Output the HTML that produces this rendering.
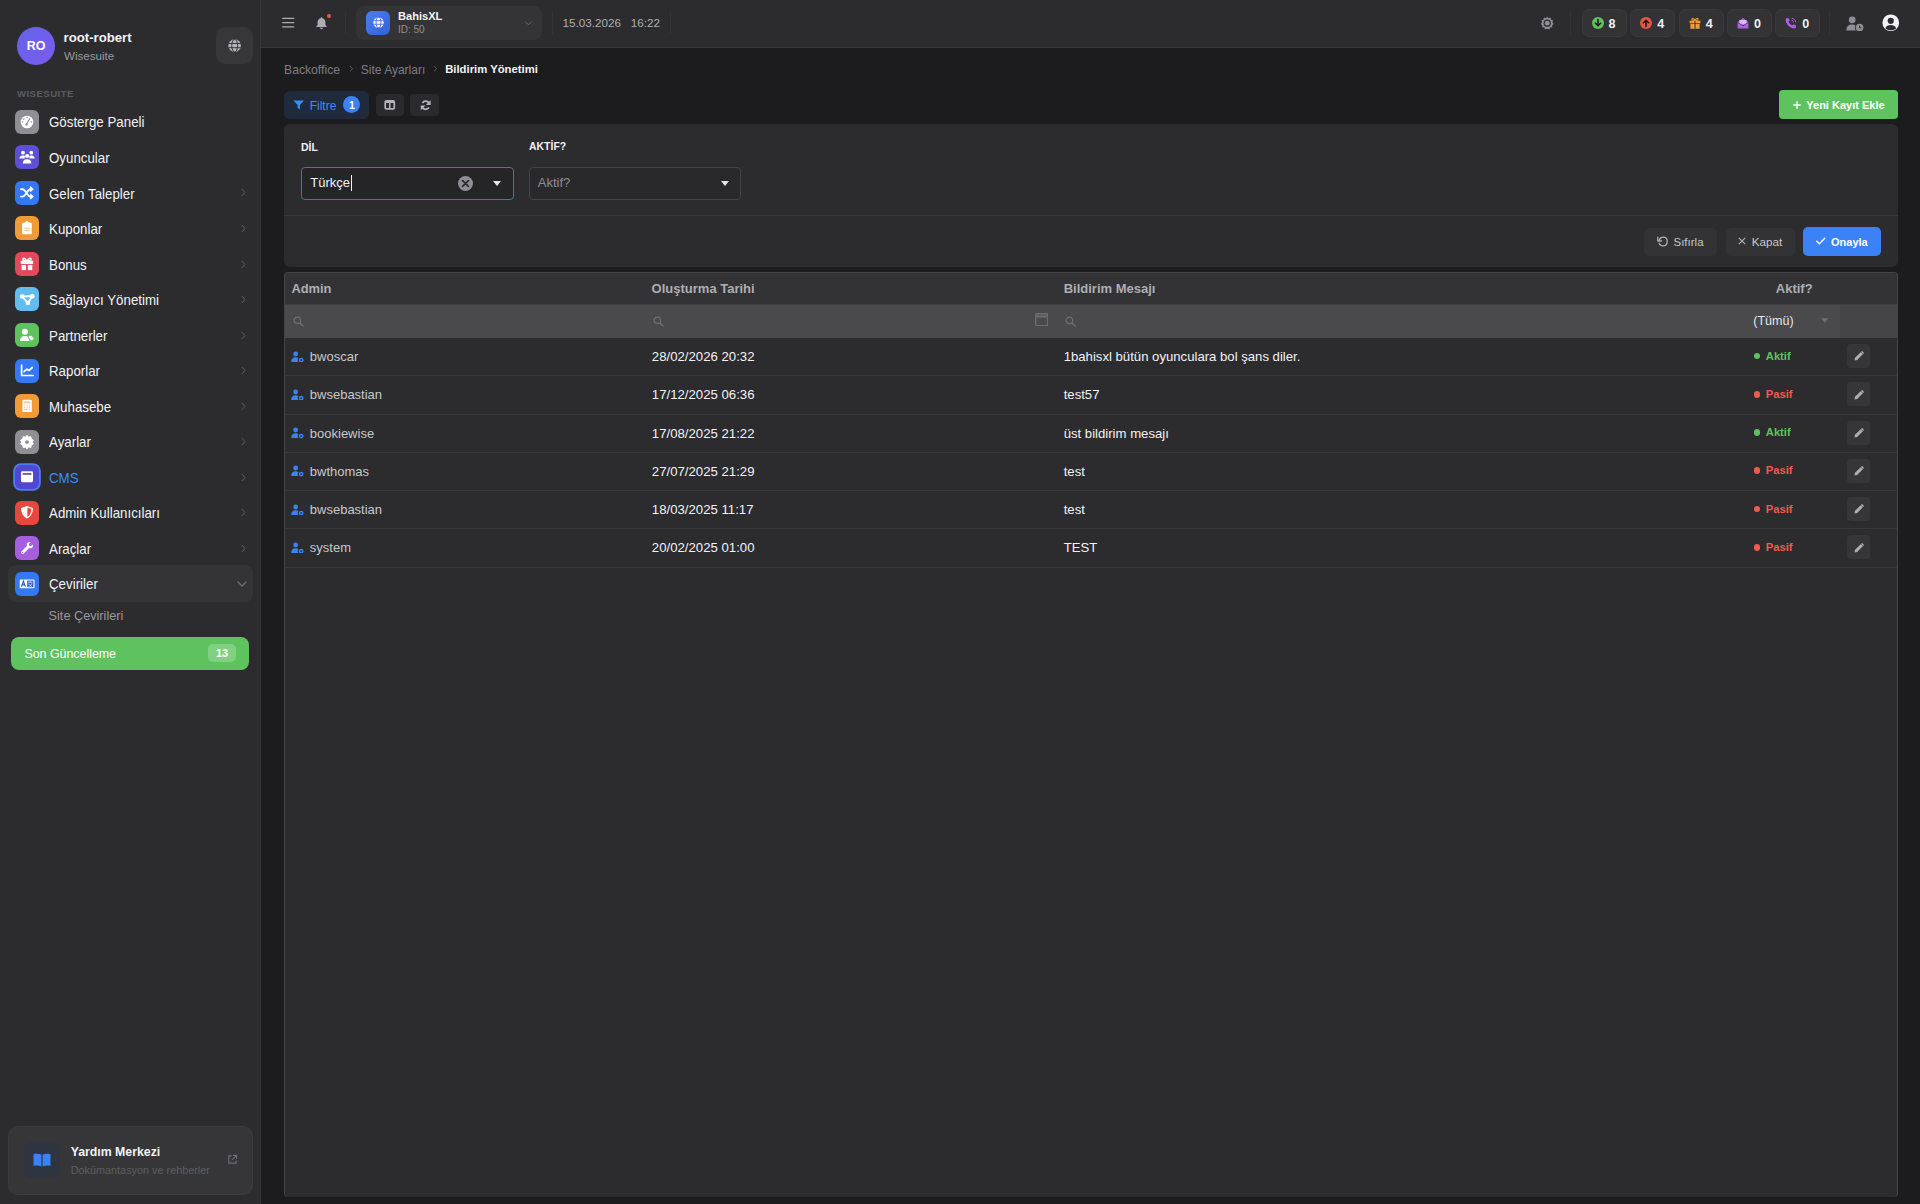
<!DOCTYPE html>
<html><head><meta charset="utf-8"><title>Bildirim Yönetimi</title>
<style>
*{box-sizing:border-box;margin:0;padding:0}
html,body{width:1920px;height:1204px;overflow:hidden;background:#1c1c1e;font-family:"Liberation Sans",sans-serif;color:#e5e5ea}
.abs{position:absolute}
.abs svg,.nav svg{display:block}
#sidebar{position:absolute;left:0;top:0;width:261px;height:1204px;background:#2c2c2e;border-right:1px solid #363638}
#topbar{position:absolute;left:261px;top:0;width:1659px;height:47.5px;background:#2c2c2e;border-bottom:1px solid #363638}
.t{position:absolute;white-space:nowrap;line-height:1}
.nav{position:absolute;left:0;width:261px;height:36px}
.nav .ic{position:absolute;left:15px;top:6px;width:24px;height:24px;border-radius:6px}
.nav .ic svg{position:absolute;left:0;top:0}
.nav .lb{position:absolute;left:48.5px;top:11.7px;font-size:14.4px;line-height:1;white-space:nowrap;transform:scaleX(0.925);transform-origin:0 0}
.panel{position:absolute;background:#2c2c2e;border-radius:6px}
.badge{position:absolute;top:9px;height:28px;width:45px;border-radius:7px;background:#333335;border:1px solid #3a3a3c}
.badge svg{position:absolute;left:9px;top:7px}
.badge span{position:absolute;left:26px;top:7.5px;font-size:12.5px;font-weight:700;color:#f2f2f7;line-height:1}
.sep{position:absolute;top:12px;width:1px;height:22px;background:#343436}
.btn{position:absolute;border-radius:5px}
.row{position:absolute;left:285px;width:1611px;height:38.3px;border-bottom:1px solid #38383a}
.cell{position:absolute;top:13px;font-size:13px;line-height:1;white-space:nowrap;color:#f2f2f7}

</style></head>
<body>
<div id="sidebar">
  <div class="abs" style="left:17px;top:27px;width:38px;height:38px;border-radius:50%;background:linear-gradient(135deg,#6462e8,#7b5cf0)"></div>
  <div class="t" style="left:17px;top:40px;width:38px;text-align:center;font-size:12.5px;font-weight:700;color:#fff">RO</div>
  <div class="t" style="left:63.5px;top:31px;font-size:13.2px;font-weight:700;color:#f2f2f7">root-robert</div>
  <div class="t" style="left:64px;top:50px;font-size:11.6px;color:#98989d">Wisesuite</div>
  <div class="abs" style="left:216px;top:27px;width:37px;height:37px;border-radius:9px;background:#37373a"><svg viewBox="0 0 16 16" width="13.3" height="13.3" style="position:absolute;left:11.8px;top:11.9px"><circle cx="8" cy="8" r="7.6" fill="#b4b4b8"/><path d="M0.4 5.4 H15.6 M0.4 10.5 H15.6" stroke="#37373a" stroke-width="1.2"/><ellipse cx="8" cy="8" rx="3.5" ry="7.6" fill="none" stroke="#37373a" stroke-width="1.2"/></svg></div>
  <div class="t" style="left:17px;top:89px;font-size:9.6px;font-weight:700;letter-spacing:0.45px;color:#5d5d61">WISESUITE</div>
<div class="nav" style="top:103.80px"><div class="ic" style="background:#8e8e93;"><svg viewBox="0 0 24 24" width="24" height="24" ><circle cx="12" cy="12" r="6.3" fill="#fff"/><circle cx="12" cy="7.6" r="0.75" fill="#8e8e93"/><circle cx="8.9" cy="8.9" r="0.75" fill="#8e8e93"/><circle cx="7.7" cy="12" r="0.75" fill="#8e8e93"/><circle cx="16.3" cy="12" r="0.75" fill="#8e8e93"/><path d="M11.6 14.2 L14.6 8.8" stroke="#8e8e93" stroke-width="1.2" stroke-linecap="round"/><circle cx="11.5" cy="14.4" r="1.2" fill="#8e8e93"/></svg></div><div class="lb" style="color:#f2f2f7">Gösterge Paneli</div>
</div>
<div class="nav" style="top:139.33px"><div class="ic" style="background:#5b50d6;"><svg viewBox="0 0 24 24" width="24" height="24" ><circle cx="8" cy="7.7" r="1.9" fill="#fff"/><circle cx="16.3" cy="7.7" r="1.9" fill="#fff"/><circle cx="12.1" cy="11" r="2.1" fill="#fff"/><path d="M4.4 13.4 C4.6 11.4 5.9 10.4 7.4 10.4 H8.6 C9.3 10.4 9.8 10.6 10.2 10.9 C9.7 11.6 9.6 12.4 9.8 13.4 Z" fill="#fff"/><path d="M19.8 13.4 C19.6 11.4 18.3 10.4 16.8 10.4 H15.6 C14.9 10.4 14.4 10.6 14 10.9 C14.5 11.6 14.6 12.4 14.4 13.4 Z" fill="#fff"/><path d="M7.7 18.4 C7.9 15.9 9.6 14.3 11.3 14.3 H12.9 C14.6 14.3 16.3 15.9 16.5 18.4 Z" fill="#fff"/></svg></div><div class="lb" style="color:#f2f2f7">Oyuncular</div>
</div>
<div class="nav" style="top:174.86px"><div class="ic" style="background:#3478f6;"><svg viewBox="0 0 24 24" width="24" height="24" ><path d="M6 8.2 H7.6 C10.6 8.2 12.4 15.6 15.4 15.6 H16.2" stroke="#fff" stroke-width="1.9" fill="none" stroke-linecap="round"/><path d="M6 15.6 H7.6 C10.6 15.6 12.4 8.2 15.4 8.2 H16.2" stroke="#fff" stroke-width="1.9" fill="none" stroke-linecap="round"/><path d="M15.4 5.6 L18.4 8.2 L15.4 10.8 Z" fill="#fff" stroke="#fff" stroke-width="0.8" stroke-linejoin="round"/><path d="M15.4 13 L18.4 15.6 L15.4 18.2 Z" fill="#fff" stroke="#fff" stroke-width="0.8" stroke-linejoin="round"/></svg></div><div class="lb" style="color:#f2f2f7">Gelen Talepler</div>
<div class="abs" style="left:240.5px;top:13.6px"><svg viewBox="0 0 6 10" width="5" height="9" ><path d="M1.2 1 L4.8 5 L1.2 9" stroke="#636367" stroke-width="1.15" fill="none" stroke-linecap="round" stroke-linejoin="round"/></svg></div>
</div>
<div class="nav" style="top:210.39px"><div class="ic" style="background:#f19a38;"><svg viewBox="0 0 24 24" width="24" height="24" ><rect x="7.1" y="6.8" width="9.7" height="11.5" rx="1.3" fill="#fff"/><circle cx="12" cy="6.4" r="1.4" fill="#fff"/><rect x="9.6" y="6.2" width="4.8" height="2" rx="0.6" fill="#fff"/><path d="M8.8 12.2 H15.2 M8.8 14.6 H15.2 M12 11.4 V15.6" stroke="#f7c48a" stroke-width="0.9"/></svg></div><div class="lb" style="color:#f2f2f7">Kuponlar</div>
<div class="abs" style="left:240.5px;top:13.6px"><svg viewBox="0 0 6 10" width="5" height="9" ><path d="M1.2 1 L4.8 5 L1.2 9" stroke="#636367" stroke-width="1.15" fill="none" stroke-linecap="round" stroke-linejoin="round"/></svg></div>
</div>
<div class="nav" style="top:245.92px"><div class="ic" style="background:#e5485a;"><svg viewBox="0 0 24 24" width="24" height="24" ><rect x="5.8" y="8.8" width="12.3" height="3.2" rx="0.5" fill="#fff"/><rect x="6.6" y="12.9" width="4.4" height="5.2" fill="#fff"/><rect x="12.9" y="12.9" width="4.4" height="5.2" fill="#fff"/><path d="M11.6 8.8 C10.6 6 8 5.6 7.9 7.2 C7.8 8.3 9.6 8.8 11.6 8.8 Z M12.4 8.8 C13.4 6 16 5.6 16.1 7.2 C16.2 8.3 14.4 8.8 12.4 8.8 Z" fill="none" stroke="#fff" stroke-width="1.4"/></svg></div><div class="lb" style="color:#f2f2f7">Bonus</div>
<div class="abs" style="left:240.5px;top:13.6px"><svg viewBox="0 0 6 10" width="5" height="9" ><path d="M1.2 1 L4.8 5 L1.2 9" stroke="#636367" stroke-width="1.15" fill="none" stroke-linecap="round" stroke-linejoin="round"/></svg></div>
</div>
<div class="nav" style="top:281.45px"><div class="ic" style="background:#62bcf0;"><svg viewBox="0 0 24 24" width="24" height="24" ><path d="M7.1 9.5 L17.3 9.2 M7.1 9.5 L12.9 16 M17.3 9.2 L12.9 16" stroke="#fff" stroke-width="1.8"/><circle cx="7.1" cy="9.5" r="2.3" fill="#fff"/><circle cx="17.3" cy="9.2" r="2.3" fill="#fff"/><circle cx="12.9" cy="16" r="2.3" fill="#fff"/></svg></div><div class="lb" style="color:#f2f2f7">Sağlayıcı Yönetimi</div>
<div class="abs" style="left:240.5px;top:13.6px"><svg viewBox="0 0 6 10" width="5" height="9" ><path d="M1.2 1 L4.8 5 L1.2 9" stroke="#636367" stroke-width="1.15" fill="none" stroke-linecap="round" stroke-linejoin="round"/></svg></div>
</div>
<div class="nav" style="top:316.98px"><div class="ic" style="background:#5ec35e;"><svg viewBox="0 0 24 24" width="24" height="24" ><circle cx="9.9" cy="8.8" r="3" fill="#fff"/><path d="M5 18.1 C5 14.9 6.9 12.9 9.9 12.9 C11.2 12.9 12.3 13.2 13.1 13.8 L14.6 18.1 Z" fill="#fff"/><path d="M13.6 13 L16 12.2 L19.3 15.5 L16.7 18.1 L13.4 14.8 Z" fill="#fff" stroke="#5ec35e" stroke-width="0.7" stroke-linejoin="round"/></svg></div><div class="lb" style="color:#f2f2f7">Partnerler</div>
<div class="abs" style="left:240.5px;top:13.6px"><svg viewBox="0 0 6 10" width="5" height="9" ><path d="M1.2 1 L4.8 5 L1.2 9" stroke="#636367" stroke-width="1.15" fill="none" stroke-linecap="round" stroke-linejoin="round"/></svg></div>
</div>
<div class="nav" style="top:352.51px"><div class="ic" style="background:#3478f6;"><svg viewBox="0 0 24 24" width="24" height="24" ><path d="M6.6 6.1 V16.5 H18.1" stroke="#fff" stroke-width="1.7" fill="none" stroke-linecap="round" stroke-linejoin="round"/><path d="M9.1 12.6 L11.8 10.1 L14 11.5 L17.3 8.5" stroke="#fff" stroke-width="1.7" fill="none" stroke-linecap="round" stroke-linejoin="round"/></svg></div><div class="lb" style="color:#f2f2f7">Raporlar</div>
<div class="abs" style="left:240.5px;top:13.6px"><svg viewBox="0 0 6 10" width="5" height="9" ><path d="M1.2 1 L4.8 5 L1.2 9" stroke="#636367" stroke-width="1.15" fill="none" stroke-linecap="round" stroke-linejoin="round"/></svg></div>
</div>
<div class="nav" style="top:388.04px"><div class="ic" style="background:#f19a38;"><svg viewBox="0 0 24 24" width="24" height="24" ><rect x="7.4" y="5.8" width="9.4" height="12.3" rx="1.2" fill="#fff"/><rect x="8.8" y="7.3" width="6.6" height="2" fill="#f19a38" opacity="0.5"/><g fill="#f19a38" opacity="0.55"><rect x="9" y="10.6" width="1.3" height="1"/><rect x="11.5" y="10.6" width="1.3" height="1"/><rect x="14" y="10.6" width="1.3" height="1"/><rect x="9" y="12.8" width="1.3" height="1"/><rect x="11.5" y="12.8" width="1.3" height="1"/><rect x="14" y="12.8" width="1.3" height="1"/><rect x="9" y="15" width="3.8" height="1"/><rect x="14" y="15" width="1.3" height="1"/></g></svg></div><div class="lb" style="color:#f2f2f7">Muhasebe</div>
<div class="abs" style="left:240.5px;top:13.6px"><svg viewBox="0 0 6 10" width="5" height="9" ><path d="M1.2 1 L4.8 5 L1.2 9" stroke="#636367" stroke-width="1.15" fill="none" stroke-linecap="round" stroke-linejoin="round"/></svg></div>
</div>
<div class="nav" style="top:423.57px"><div class="ic" style="background:#8e8e93;"><svg viewBox="0 0 24 24" width="24" height="24" ><path d="M12 5.2 L13.4 7.2 L15.8 6.6 L16.3 9 L18.4 10.2 L17.2 12.1 L18.4 14 L16.3 15.2 L15.8 17.6 L13.4 17 L12 19 L10.6 17 L8.2 17.6 L7.7 15.2 L5.6 14 L6.8 12.1 L5.6 10.2 L7.7 9 L8.2 6.6 L10.6 7.2 Z" fill="#fff" stroke="#fff" stroke-width="0.9" stroke-linejoin="round"/><circle cx="12" cy="12.1" r="1.9" fill="#8e8e93"/></svg></div><div class="lb" style="color:#f2f2f7">Ayarlar</div>
<div class="abs" style="left:240.5px;top:13.6px"><svg viewBox="0 0 6 10" width="5" height="9" ><path d="M1.2 1 L4.8 5 L1.2 9" stroke="#636367" stroke-width="1.15" fill="none" stroke-linecap="round" stroke-linejoin="round"/></svg></div>
</div>
<div class="nav" style="top:459.10px"><div class="ic" style="background:#5048d2;box-shadow:0 0 0 1.8px #4a7ff2;"><svg viewBox="0 0 24 24" width="24" height="24" ><rect x="6" y="6.2" width="12" height="11" rx="1.4" fill="#fff"/><rect x="7.6" y="8.1" width="8.8" height="1.7" fill="#5a5690"/></svg></div><div class="lb" style="color:#3b8cf7">CMS</div>
<div class="abs" style="left:240.5px;top:13.6px"><svg viewBox="0 0 6 10" width="5" height="9" ><path d="M1.2 1 L4.8 5 L1.2 9" stroke="#636367" stroke-width="1.15" fill="none" stroke-linecap="round" stroke-linejoin="round"/></svg></div>
</div>
<div class="nav" style="top:494.63px"><div class="ic" style="background:#e5483c;"><svg viewBox="0 0 24 24" width="24" height="24" ><path d="M12 4.9 L17.9 7 C17.9 12.4 15.6 15.8 12 17.5 C8.4 15.8 6.1 12.4 6.1 7 Z" fill="#fff"/><path d="M12.4 6.6 L16.5 8 C16.3 12 14.8 14.6 12.4 15.9 Z" fill="#e5483c"/></svg></div><div class="lb" style="color:#f2f2f7">Admin Kullanıcıları</div>
<div class="abs" style="left:240.5px;top:13.6px"><svg viewBox="0 0 6 10" width="5" height="9" ><path d="M1.2 1 L4.8 5 L1.2 9" stroke="#636367" stroke-width="1.15" fill="none" stroke-linecap="round" stroke-linejoin="round"/></svg></div>
</div>
<div class="nav" style="top:530.16px"><div class="ic" style="background:#a55ee0;"><svg viewBox="0 0 24 24" width="24" height="24" ><path d="M17.7 8.4 L15.9 10.1 L14.2 9.8 L13.9 8.1 L15.6 6.3 C14 5.7 12.1 6.5 11.8 8.2 C11.7 8.8 11.7 9.4 12 9.9 L6.6 15.3 C6 15.9 6 16.9 6.6 17.5 C7.2 18.1 8.2 18.1 8.8 17.5 L14.2 12.1 C14.7 12.4 15.3 12.4 15.9 12.3 C17.6 12 18.4 10 17.7 8.4 Z" fill="#fff"/><circle cx="7.7" cy="16.4" r="0.6" fill="#a55ee0"/></svg></div><div class="lb" style="color:#f2f2f7">Araçlar</div>
<div class="abs" style="left:240.5px;top:13.6px"><svg viewBox="0 0 6 10" width="5" height="9" ><path d="M1.2 1 L4.8 5 L1.2 9" stroke="#636367" stroke-width="1.15" fill="none" stroke-linecap="round" stroke-linejoin="round"/></svg></div>
</div>
<div class="abs" style="left:8px;top:565.49px;width:244.5px;height:36.5px;border-radius:8px;background:#343436"></div>
<div class="nav" style="top:565.69px"><div class="ic" style="background:#3478f6;"><svg viewBox="0 0 24 24" width="24" height="24" ><rect x="4.7" y="7.4" width="14.8" height="8.8" rx="1" fill="#fff"/><path d="M6.4 14.6 L8.4 9.2 L10.4 14.6 M7.1 12.9 H9.7" stroke="#2f5fc8" stroke-width="1.2" fill="none"/><rect x="12.2" y="8.6" width="6.2" height="6.6" fill="#2f5fc8"/><path d="M13.2 10.2 H17.4 M15.3 9.4 V10.2 M13.8 11.6 C14.6 13.4 15.8 14.2 17 14.4 M16.8 11.4 C16.2 13 15 14.2 13.6 14.6" stroke="#fff" stroke-width="0.7" fill="none"/></svg></div><div class="lb" style="color:#f2f2f7">Çeviriler</div>
<div class="abs" style="left:237px;top:15px"><svg viewBox="0 0 10 6" width="10" height="6" ><path d="M1 1 L5 5 L9 1" stroke="#6e6e73" stroke-width="1.2" fill="none" stroke-linecap="round" stroke-linejoin="round"/></svg></div>
</div>
  <div class="t" style="left:48.6px;top:610px;font-size:12.7px;color:#98989d">Site Çevirileri</div>
  <div class="abs" style="left:11px;top:636.6px;width:238px;height:33px;border-radius:8px;background:#5ec35e"></div>
  <div class="t" style="left:24.4px;top:648px;font-size:12.4px;color:#fff">Son Güncelleme</div>
  <div class="abs" style="left:208px;top:644px;width:28px;height:18px;border-radius:5px;background:rgba(255,255,255,0.22)"></div>
  <div class="t" style="left:208px;top:648px;width:28px;text-align:center;font-size:11px;font-weight:700;color:#fff">13</div>
  <div class="abs" style="left:7.5px;top:1125.5px;width:245.5px;height:69.5px;border-radius:10px;background:#363638;border:1px solid #3c3c3e"></div>
  <div class="abs" style="left:24px;top:1141.5px;width:36px;height:36px;border-radius:8px;background:#2e3440"><svg viewBox="0 0 18 14" width="18" height="14" style="position:absolute;left:9px;top:11px"><path d="M0.5 1.2 C3 0.4 6 0.6 8.4 1.6 V13.4 C6 12.4 3 12.3 0.5 13 Z" fill="#3b82f6"/><path d="M17.5 1.2 C15 0.4 12 0.6 9.6 1.6 V13.4 C12 12.4 15 12.3 17.5 13 Z" fill="#3b82f6"/></svg></div>
  <div class="t" style="left:70.7px;top:1146px;font-size:12.3px;font-weight:700;color:#f2f2f7">Yardım Merkezi</div>
  <div class="t" style="left:70.7px;top:1165px;font-size:10.85px;color:#5d5d62">Dokümantasyon ve rehberler</div>
  <div class="abs" style="left:227px;top:1154px"><svg viewBox="0 0 12 12" width="11" height="11" ><path d="M5 2 H2 V10 H10 V7" stroke="#6e6e73" stroke-width="1.2" fill="none"/><path d="M6.5 1.5 H10.5 V5.5 M10.5 1.5 L5.5 6.5" stroke="#6e6e73" stroke-width="1.2" fill="none"/></svg></div>
</div>
<div id="topbar">
<div class="abs" style="left:21px;top:17px;"><svg viewBox="0 0 13 11" width="12.5" height="11" ><path d="M0.7 1.2 H12.3 M0.7 5.6 H12.3 M0.7 10 H12.3" stroke="#aeaeb2" stroke-width="1.3" stroke-linecap="round"/></svg></div>
<div class="abs" style="left:54px;top:16px;"><svg viewBox="0 0 14 14" width="13" height="14" ><path d="M7 0.8 C7.6 0.8 8 1.2 8 1.8 C10.2 2.3 11.2 4.2 11.2 6.4 V9 L12.6 10.8 V11.4 H1.4 V10.8 L2.8 9 V6.4 C2.8 4.2 3.8 2.3 6 1.8 C6 1.2 6.4 0.8 7 0.8 Z" fill="#aeaeb2"/><path d="M5.4 12.2 H8.6 C8.6 13.1 7.9 13.8 7 13.8 C6.1 13.8 5.4 13.1 5.4 12.2 Z" fill="#aeaeb2"/></svg></div>
<div class="abs" style="left:65.69999999999999px;top:14px;"><div style="width:4.4px;height:4.4px;border-radius:50%;background:#e8574b"></div></div>
<div class="sep" style="left:84px"></div>
<div class="abs" style="left:95px;top:6px;width:186px;height:34px;border-radius:8px;background:#343436"></div>
<div class="abs" style="left:105px;top:10.5px;width:24px;height:24px;border-radius:6px;background:linear-gradient(135deg,#4a7ef0,#3560d8)"><svg viewBox="0 0 16 16" width="11" height="11" style="position:absolute;left:6.5px;top:6.5px"><circle cx="8" cy="8" r="7.6" fill="#fff"/><path d="M0.4 5.4 H15.6 M0.4 10.5 H15.6" stroke="#3d6ae6" stroke-width="1.3"/><ellipse cx="8" cy="8" rx="3.5" ry="7.6" fill="none" stroke="#3d6ae6" stroke-width="1.3"/></svg></div>
<div class="t" style="left:137px;top:11.2px;font-size:11.1px;font-weight:700;color:#f2f2f7;">BahisXL</div>
<div class="t" style="left:137px;top:24.6px;font-size:10px;font-weight:400;color:#8e8e93;">ID: 50</div>
<div class="abs" style="left:264px;top:21px;"><svg viewBox="0 0 8 5" width="7" height="5" ><path d="M0.8 0.8 L4 4 L7.2 0.8" stroke="#6e6e73" stroke-width="1.1" fill="none" stroke-linecap="round"/></svg></div>
<div class="sep" style="left:291px"></div>
<div class="t" style="left:301.5px;top:17.2px;font-size:11.7px;font-weight:400;color:#aeaeb2;">15.03.2026</div>
<div class="t" style="left:369.79999999999995px;top:17.2px;font-size:11.7px;font-weight:400;color:#aeaeb2;">16:22</div>
<div class="sep" style="left:408.5px"></div>
<div class="abs" style="left:1278.8px;top:15.5px;"><svg viewBox="0 0 16 16" width="14.5" height="14.5" ><path d="M8 0.6 L9.4 2.4 L11.7 1.7 L12.1 4 L14.4 4.8 L13.6 7 L15.2 8.8 L13.4 10.2 L13.6 12.5 L11.3 12.8 L10.2 14.9 L8 14 L5.8 14.9 L4.7 12.8 L2.4 12.5 L2.6 10.2 L0.8 8.8 L2.4 7 L1.6 4.8 L3.9 4 L4.3 1.7 L6.6 2.4 Z" fill="#8e8e93"/><circle cx="8" cy="7.9" r="4" fill="#2c2c2e"/><circle cx="8" cy="7.9" r="2.7" fill="#8e8e93"/></svg></div>
<div class="sep" style="left:1309px"></div>
<div class="badge" style="left:1320.5px"><svg viewBox="0 0 12 12" width="12" height="12" ><circle cx="6" cy="6" r="6" fill="#5ec35e"/><path d="M6 2.6 V8.6 M3.4 6.2 L6 8.8 L8.6 6.2" stroke="#1c1c1e" stroke-width="1.6" fill="none" stroke-linecap="round" stroke-linejoin="round"/></svg><span>8</span></div>
<div class="badge" style="left:1369.2px"><svg viewBox="0 0 12 12" width="12" height="12" ><circle cx="6" cy="6" r="6" fill="#ec5447"/><path d="M6 9.4 V3.4 M3.4 5.8 L6 3.2 L8.6 5.8" stroke="#1c1c1e" stroke-width="1.6" fill="none" stroke-linecap="round" stroke-linejoin="round"/></svg><span>4</span></div>
<div class="badge" style="left:1417.7px"><svg viewBox="0 0 12 12" width="12" height="12" ><rect x="0.6" y="3.6" width="10.8" height="2.6" fill="#f19a38"/><rect x="1.4" y="6.8" width="9.2" height="5" fill="#f19a38"/><path d="M6 3.6 V11.8" stroke="#333335" stroke-width="1"/><path d="M6 3.4 C5 0.8 2.6 1 3 2.6 C3.3 3.4 4.8 3.4 6 3.4 C7.2 3.4 8.7 3.4 9 2.6 C9.4 1 7 0.8 6 3.4 Z" fill="none" stroke="#f19a38" stroke-width="1.1"/></svg><span>4</span></div>
<div class="badge" style="left:1466px"><svg viewBox="0 0 12 12" width="12" height="12" ><path d="M0.6 5 L6 1 L11.4 5 V11.4 H0.6 Z" fill="#b05ee8"/><rect x="2.4" y="3" width="7.2" height="4.4" fill="#d9b5f5"/><path d="M0.6 5.4 L6 8.8 L11.4 5.4" stroke="#333335" stroke-width="0.8" fill="none"/></svg><span>0</span></div>
<div class="badge" style="left:1514.2px"><svg viewBox="0 0 12 12" width="12" height="12" ><path d="M3.2 0.8 L4.8 3.4 L3.6 4.8 C4.3 6.5 5.5 7.7 7.2 8.4 L8.6 7.2 L11.2 8.8 L10.6 11 C10.4 11.4 10 11.4 9.6 11.4 C4.6 11 1 7.4 0.6 2.4 C0.6 2 0.6 1.6 1 1.4 Z" fill="#b05ee8"/><path d="M7 3.4 C7.9 3.6 8.4 4.1 8.6 5 M7.2 1.4 C9 1.7 10.3 3 10.6 4.8" stroke="#b05ee8" stroke-width="1" fill="none" stroke-linecap="round"/></svg><span>0</span></div>
<div class="sep" style="left:1568px"></div>
<div class="abs" style="left:1584.5px;top:15.5px;"><svg viewBox="0 0 18 15" width="18" height="15" ><circle cx="6.2" cy="3.8" r="3.4" fill="#8e8e93"/><path d="M0.4 14.4 C0.4 10.6 2.6 8.6 6.2 8.6 C7.6 8.6 8.8 8.9 9.6 9.4 C9.2 10.1 9 10.9 9 11.8 C9 12.8 9.3 13.7 9.8 14.4 Z" fill="#8e8e93"/><circle cx="13.6" cy="11.6" r="3.8" fill="#8e8e93"/><path d="M13.6 9.6 V11.8 H15.2" stroke="#2c2c2e" stroke-width="1" fill="none"/></svg></div>
<div class="abs" style="left:1621.4px;top:13.6px;"><svg viewBox="0 0 18 18" width="17.5" height="17.5" ><circle cx="9" cy="9" r="8.6" fill="#f2f2f7"/><circle cx="9" cy="7" r="3.2" fill="#2c2c2e"/><path d="M3.4 14.6 C4.4 12.2 6.4 11.2 9 11.2 C11.6 11.2 13.6 12.2 14.6 14.6 C13.2 16 11.2 16.8 9 16.8 C6.8 16.8 4.8 16 3.4 14.6 Z" fill="#2c2c2e"/></svg></div>
</div>
<div class="t" style="left:284px;top:63.5px;font-size:12.2px;font-weight:400;color:#7d7d82;">Backoffice</div>
<div class="abs" style="left:348.5px;top:65px;"><svg viewBox="0 0 5 8" width="4.5" height="7.5" ><path d="M1 1 L4 4 L1 7" stroke="#636366" stroke-width="1" fill="none"/></svg></div>
<div class="t" style="left:360.8px;top:63.5px;font-size:12px;font-weight:400;color:#7d7d82;">Site Ayarları</div>
<div class="abs" style="left:432.5px;top:65px;"><svg viewBox="0 0 5 8" width="4.5" height="7.5" ><path d="M1 1 L4 4 L1 7" stroke="#636366" stroke-width="1" fill="none"/></svg></div>
<div class="t" style="left:445.2px;top:63.5px;font-size:11.3px;font-weight:700;color:#f2f2f7;">Bildirim Yönetimi</div>
<div class="abs" style="left:284px;top:91px;width:85px;height:27.5px;border-radius:6px;background:#1f2a3c"></div>
<div class="abs" style="left:293px;top:100px;"><svg viewBox="0 0 12 10" width="11.5" height="10" ><path d="M0.4 0.4 H11.6 L7.2 5 V9.6 L4.8 8.2 V5 Z" fill="#3b8cf7"/></svg></div>
<div class="t" style="left:309.7px;top:99.5px;font-size:12px;font-weight:400;color:#3b8cf7;">Filtre</div>
<div class="abs" style="left:343.3px;top:96px;width:17px;height:17px;border-radius:50%;background:#3b82f6"><div style="position:absolute;left:0;top:4px;width:17px;font-size:10.5px;font-weight:700;color:#fff;text-align:center;line-height:1">1</div></div>
<div class="abs" style="left:375.6px;top:93.8px;width:28.8px;height:22.4px;border-radius:4px;background:#2a2a2c"><svg viewBox="0 0 12 11" width="11.5" height="10" style="position:absolute;left:8.6px;top:6.3px"><rect x="1" y="1" width="10" height="8.8" rx="1.4" fill="none" stroke="#b4b4b8" stroke-width="1.9"/><path d="M6 1 V9.8" stroke="#b4b4b8" stroke-width="1.7"/><path d="M1 2.2 H11" stroke="#b4b4b8" stroke-width="2.2"/></svg></div>
<div class="abs" style="left:410.4px;top:93.8px;width:28.8px;height:22.4px;border-radius:4px;background:#2a2a2c"><svg viewBox="0 0 12 12" width="11.4" height="10.6" style="position:absolute;left:9.4px;top:6.2px"><path d="M10 4.4 C9.3 2.5 7.8 1.4 6 1.4 C4.4 1.4 3.1 2.2 2.3 3.4" stroke="#b4b4b8" stroke-width="2" fill="none"/><path d="M11.6 0.4 V5.8 H6.2 Z" fill="#b4b4b8"/><path d="M2 7.6 C2.7 9.5 4.2 10.6 6 10.6 C7.6 10.6 8.9 9.8 9.7 8.6" stroke="#b4b4b8" stroke-width="2" fill="none"/><path d="M0.4 11.6 V6.2 H5.8 Z" fill="#b4b4b8"/></svg></div>
<div class="abs" style="left:1778.5px;top:90.4px;width:119px;height:28.2px;border-radius:4px;background:#5ec35e"></div>
<div class="abs" style="left:1792.5px;top:100.5px;"><svg viewBox="0 0 8 8" width="8" height="8" ><path d="M4 0.3 V7.7 M0.3 4 H7.7" stroke="#fff" stroke-width="1.3"/></svg></div>
<div class="t" style="left:1806.3px;top:99.5px;font-size:11px;font-weight:700;color:#fff;">Yeni Kayıt Ekle</div>
<div class="abs" style="left:284px;top:124px;width:1613.5px;height:142.5px;border-radius:6px;background:#2c2c2e"></div>
<div class="abs" style="left:284px;top:215px;width:1613.5px;height:1px;background:#38383a"></div>
<div class="t" style="left:300.9px;top:141.5px;font-size:10.5px;font-weight:700;color:#f2f2f7;">DİL</div>
<div class="t" style="left:529px;top:141.5px;font-size:10.4px;font-weight:700;color:#f2f2f7;letter-spacing:0.05px">AKTİF?</div>
<div class="abs" style="left:301px;top:167px;width:213px;height:33px;border-radius:4px;background:#252527;border:1.5px solid #3b7aa5"></div>
<div class="t" style="left:310.3px;top:176px;font-size:13px;font-weight:400;color:#f2f2f7;">Türkçe</div>
<div class="abs" style="left:350.5px;top:175px;width:1px;height:15.5px;background:#f2f2f7"></div>
<div class="abs" style="left:457.7px;top:175.6px;"><svg viewBox="0 0 15 15" width="15" height="15" ><circle cx="7.5" cy="7.5" r="7.5" fill="#8e8e93"/><path d="M4.6 4.6 L10.4 10.4 M10.4 4.6 L4.6 10.4" stroke="#2a2a2c" stroke-width="1.7" stroke-linecap="round"/></svg></div>
<div class="abs" style="left:492.7px;top:180.6px;"><svg viewBox="0 0 8 5" width="8" height="5" ><path d="M0 0 H8 L4 5 Z" fill="#e5e5ea"/></svg></div>
<div class="abs" style="left:529px;top:167px;width:212px;height:32.5px;border-radius:4px;background:#29292b;border:1px solid #444446"></div>
<div class="t" style="left:537.8px;top:176px;font-size:13px;font-weight:400;color:#8e8e93;">Aktif?</div>
<div class="abs" style="left:720.5px;top:180.6px;"><svg viewBox="0 0 8 5" width="8" height="5" ><path d="M0 0 H8 L4 5 Z" fill="#e5e5ea"/></svg></div>
<div class="abs" style="left:1644px;top:227.6px;width:73px;height:28.4px;border-radius:5px;background:#333335"></div>
<div class="abs" style="left:1657px;top:236px;"><svg viewBox="0 0 11 11" width="11" height="11" ><path d="M2.2 4.2 C2.8 2.4 4.4 1.2 6.2 1.2 C8.6 1.2 10.2 3 10.2 5.5 C10.2 8 8.4 9.8 6 9.8 C4.2 9.8 2.8 8.8 2.2 7.4" stroke="#aeaeb2" stroke-width="1.3" fill="none" stroke-linecap="round"/><path d="M0.8 1.2 V5 H4.6" stroke="#aeaeb2" stroke-width="1.3" fill="none" stroke-linecap="round" stroke-linejoin="round"/></svg></div>
<div class="t" style="left:1673.5px;top:236.5px;font-size:11.5px;font-weight:400;color:#c7c7cc;">Sıfırla</div>
<div class="abs" style="left:1725.5px;top:227.6px;width:69.6px;height:28.4px;border-radius:5px;background:#333335"></div>
<div class="abs" style="left:1738px;top:237px;"><svg viewBox="0 0 8 8" width="8" height="8" ><path d="M0.8 0.8 L7.2 7.2 M7.2 0.8 L0.8 7.2" stroke="#aeaeb2" stroke-width="1.2"/></svg></div>
<div class="t" style="left:1751.8px;top:235.5px;font-size:11.7px;font-weight:400;color:#c7c7cc;">Kapat</div>
<div class="abs" style="left:1802.8px;top:227.3px;width:78px;height:28.5px;border-radius:5px;background:#3b82f6"></div>
<div class="abs" style="left:1816px;top:237px;"><svg viewBox="0 0 10 8" width="9.5" height="8" ><path d="M0.8 4.2 L3.6 7 L9.2 1" stroke="#fff" stroke-width="1.5" fill="none" stroke-linecap="round" stroke-linejoin="round"/></svg></div>
<div class="t" style="left:1831px;top:236.5px;font-size:11px;font-weight:700;color:#fff;">Onayla</div>
<div class="abs" style="left:284px;top:272px;width:1613.5px;height:924.5px;border-radius:4px;background:#2c2c2e;border:1px solid #444446;border-bottom:none;overflow:hidden"></div>
<div class="abs" style="left:285px;top:273px;width:1611.5px;height:31px;border-radius:3px 3px 0 0;background:#333335"></div>
<div class="abs" style="left:285px;top:304px;width:1611.5px;height:1px;background:#3f3f41"></div>
<div class="abs" style="left:285px;top:305px;width:1555px;height:32.8px;background:#4a4a4c"></div>
<div class="abs" style="left:1840px;top:305px;width:56.5px;height:32.8px;background:#454547"></div>
<div class="t" style="left:291.4px;top:283px;font-size:12.9px;font-weight:700;color:#aeaeb2;">Admin</div>
<div class="t" style="left:651.6px;top:281.8px;font-size:13px;font-weight:700;color:#aeaeb2;">Oluşturma Tarihi</div>
<div class="t" style="left:1063.7px;top:281.8px;font-size:13px;font-weight:700;color:#aeaeb2;">Bildirim Mesajı</div>
<div class="t" style="left:1775.8px;top:281.8px;font-size:13px;font-weight:700;color:#aeaeb2;">Aktif?</div>
<div class="abs" style="left:293px;top:315.5px;"><svg viewBox="0 0 12 12" width="11" height="11" ><circle cx="4.8" cy="4.8" r="3.6" fill="none" stroke="#6e6e73" stroke-width="1.3"/><path d="M7.6 7.6 L11 11" stroke="#6e6e73" stroke-width="1.5" stroke-linecap="round"/></svg></div>
<div class="abs" style="left:652.5px;top:315.5px;"><svg viewBox="0 0 12 12" width="11" height="11" ><circle cx="4.8" cy="4.8" r="3.6" fill="none" stroke="#6e6e73" stroke-width="1.3"/><path d="M7.6 7.6 L11 11" stroke="#6e6e73" stroke-width="1.5" stroke-linecap="round"/></svg></div>
<div class="abs" style="left:1065px;top:315.5px;"><svg viewBox="0 0 12 12" width="11" height="11" ><circle cx="4.8" cy="4.8" r="3.6" fill="none" stroke="#6e6e73" stroke-width="1.3"/><path d="M7.6 7.6 L11 11" stroke="#6e6e73" stroke-width="1.5" stroke-linecap="round"/></svg></div>
<div class="abs" style="left:1034.7px;top:312.8px;"><svg viewBox="0 0 14 14" width="13.5" height="13.5" ><rect x="0.8" y="0.8" width="12.4" height="12.4" rx="1.2" fill="none" stroke="#6e6e73" stroke-width="1.4"/><path d="M0.8 3.6 H13.2" stroke="#6e6e73" stroke-width="2.2"/></svg></div>
<div class="t" style="left:1753.3px;top:315px;font-size:12.5px;font-weight:400;color:#e5e5ea;">(Tümü)</div>
<div class="abs" style="left:1820.8px;top:318px;"><svg viewBox="0 0 8 5" width="7.5" height="5" ><path d="M0 0 H8 L4 5 Z" fill="#6e6e73"/></svg></div>
<div class="abs" style="left:285px;top:375.25px;width:1611.5px;height:1px;background:#38383a"></div>
<div class="abs" style="left:291.4px;top:350.5px;"><svg viewBox="0 0 14 12" width="13" height="11.5" ><circle cx="5" cy="3" r="2.6" fill="#3b82f6"/><path d="M0.2 11.6 C0.2 8.4 2 6.6 5 6.6 C6.2 6.6 7.2 6.9 7.9 7.4 C7.5 8 7.3 8.8 7.3 9.6 C7.3 10.4 7.5 11.1 7.9 11.6 Z" fill="#3b82f6"/><circle cx="11" cy="9.6" r="2.5" fill="#3b82f6"/><circle cx="11" cy="9.6" r="1" fill="#2c2c2e"/></svg></div>
<div class="t" style="left:309.8px;top:350.0px;font-size:13px;font-weight:400;color:#c7c7cc;">bwoscar</div>
<div class="t" style="left:651.8px;top:350.0px;font-size:13.2px;font-weight:400;color:#f2f2f7;">28/02/2026 20:32</div>
<div class="t" style="left:1063.7px;top:350.0px;font-size:13.15px;font-weight:400;color:#f2f2f7;">1bahisxl bütün oyunculara bol şans diler.</div>
<div class="abs" style="left:1753.6px;top:352.6px;width:6.8px;height:6.8px;border-radius:50%;background:#5ec35e"></div>
<div class="t" style="left:1765.8px;top:350.5px;font-size:11.2px;font-weight:700;color:#5ec35e;">Aktif</div>
<div class="abs" style="left:1846.8px;top:344.2px;width:23.6px;height:24px;border-radius:3.5px;background:#363638"><svg style="position:absolute;left:6.8px;top:7.2px" viewBox="0 0 12 12" width="10" height="10" ><path d="M0.6 11.4 L1.2 8.2 L8 1.4 L10.6 4 L3.8 10.8 Z" fill="#aeaeb2"/><path d="M8.8 0.6 C9.3 0.1 10 0.1 10.5 0.6 L11.4 1.5 C11.9 2 11.9 2.7 11.4 3.2 L10.9 3.7 L8.3 1.1 Z" fill="#aeaeb2"/></svg></div>
<div class="abs" style="left:285px;top:413.5px;width:1611.5px;height:1px;background:#38383a"></div>
<div class="abs" style="left:291.4px;top:388.75px;"><svg viewBox="0 0 14 12" width="13" height="11.5" ><circle cx="5" cy="3" r="2.6" fill="#3b82f6"/><path d="M0.2 11.6 C0.2 8.4 2 6.6 5 6.6 C6.2 6.6 7.2 6.9 7.9 7.4 C7.5 8 7.3 8.8 7.3 9.6 C7.3 10.4 7.5 11.1 7.9 11.6 Z" fill="#3b82f6"/><circle cx="11" cy="9.6" r="2.5" fill="#3b82f6"/><circle cx="11" cy="9.6" r="1" fill="#2c2c2e"/></svg></div>
<div class="t" style="left:309.8px;top:388.25px;font-size:13px;font-weight:400;color:#c7c7cc;">bwsebastian</div>
<div class="t" style="left:651.8px;top:388.25px;font-size:13.2px;font-weight:400;color:#f2f2f7;">17/12/2025 06:36</div>
<div class="t" style="left:1063.7px;top:388.25px;font-size:13.15px;font-weight:400;color:#f2f2f7;">test57</div>
<div class="abs" style="left:1753.6px;top:390.85px;width:6.8px;height:6.8px;border-radius:50%;background:#ef5b4c"></div>
<div class="t" style="left:1765.8px;top:388.75px;font-size:11.2px;font-weight:700;color:#ef5b4c;">Pasif</div>
<div class="abs" style="left:1846.8px;top:382.45px;width:23.6px;height:24px;border-radius:3.5px;background:#363638"><svg style="position:absolute;left:6.8px;top:7.2px" viewBox="0 0 12 12" width="10" height="10" ><path d="M0.6 11.4 L1.2 8.2 L8 1.4 L10.6 4 L3.8 10.8 Z" fill="#aeaeb2"/><path d="M8.8 0.6 C9.3 0.1 10 0.1 10.5 0.6 L11.4 1.5 C11.9 2 11.9 2.7 11.4 3.2 L10.9 3.7 L8.3 1.1 Z" fill="#aeaeb2"/></svg></div>
<div class="abs" style="left:285px;top:451.75px;width:1611.5px;height:1px;background:#38383a"></div>
<div class="abs" style="left:291.4px;top:427.0px;"><svg viewBox="0 0 14 12" width="13" height="11.5" ><circle cx="5" cy="3" r="2.6" fill="#3b82f6"/><path d="M0.2 11.6 C0.2 8.4 2 6.6 5 6.6 C6.2 6.6 7.2 6.9 7.9 7.4 C7.5 8 7.3 8.8 7.3 9.6 C7.3 10.4 7.5 11.1 7.9 11.6 Z" fill="#3b82f6"/><circle cx="11" cy="9.6" r="2.5" fill="#3b82f6"/><circle cx="11" cy="9.6" r="1" fill="#2c2c2e"/></svg></div>
<div class="t" style="left:309.8px;top:426.5px;font-size:13px;font-weight:400;color:#c7c7cc;">bookiewise</div>
<div class="t" style="left:651.8px;top:426.5px;font-size:13.2px;font-weight:400;color:#f2f2f7;">17/08/2025 21:22</div>
<div class="t" style="left:1063.7px;top:426.5px;font-size:13.15px;font-weight:400;color:#f2f2f7;">üst bildirim mesajı</div>
<div class="abs" style="left:1753.6px;top:429.1px;width:6.8px;height:6.8px;border-radius:50%;background:#5ec35e"></div>
<div class="t" style="left:1765.8px;top:427.0px;font-size:11.2px;font-weight:700;color:#5ec35e;">Aktif</div>
<div class="abs" style="left:1846.8px;top:420.7px;width:23.6px;height:24px;border-radius:3.5px;background:#363638"><svg style="position:absolute;left:6.8px;top:7.2px" viewBox="0 0 12 12" width="10" height="10" ><path d="M0.6 11.4 L1.2 8.2 L8 1.4 L10.6 4 L3.8 10.8 Z" fill="#aeaeb2"/><path d="M8.8 0.6 C9.3 0.1 10 0.1 10.5 0.6 L11.4 1.5 C11.9 2 11.9 2.7 11.4 3.2 L10.9 3.7 L8.3 1.1 Z" fill="#aeaeb2"/></svg></div>
<div class="abs" style="left:285px;top:490.0px;width:1611.5px;height:1px;background:#38383a"></div>
<div class="abs" style="left:291.4px;top:465.25px;"><svg viewBox="0 0 14 12" width="13" height="11.5" ><circle cx="5" cy="3" r="2.6" fill="#3b82f6"/><path d="M0.2 11.6 C0.2 8.4 2 6.6 5 6.6 C6.2 6.6 7.2 6.9 7.9 7.4 C7.5 8 7.3 8.8 7.3 9.6 C7.3 10.4 7.5 11.1 7.9 11.6 Z" fill="#3b82f6"/><circle cx="11" cy="9.6" r="2.5" fill="#3b82f6"/><circle cx="11" cy="9.6" r="1" fill="#2c2c2e"/></svg></div>
<div class="t" style="left:309.8px;top:464.75px;font-size:13px;font-weight:400;color:#c7c7cc;">bwthomas</div>
<div class="t" style="left:651.8px;top:464.75px;font-size:13.2px;font-weight:400;color:#f2f2f7;">27/07/2025 21:29</div>
<div class="t" style="left:1063.7px;top:464.75px;font-size:13.15px;font-weight:400;color:#f2f2f7;">test</div>
<div class="abs" style="left:1753.6px;top:467.35px;width:6.8px;height:6.8px;border-radius:50%;background:#ef5b4c"></div>
<div class="t" style="left:1765.8px;top:465.25px;font-size:11.2px;font-weight:700;color:#ef5b4c;">Pasif</div>
<div class="abs" style="left:1846.8px;top:458.95px;width:23.6px;height:24px;border-radius:3.5px;background:#363638"><svg style="position:absolute;left:6.8px;top:7.2px" viewBox="0 0 12 12" width="10" height="10" ><path d="M0.6 11.4 L1.2 8.2 L8 1.4 L10.6 4 L3.8 10.8 Z" fill="#aeaeb2"/><path d="M8.8 0.6 C9.3 0.1 10 0.1 10.5 0.6 L11.4 1.5 C11.9 2 11.9 2.7 11.4 3.2 L10.9 3.7 L8.3 1.1 Z" fill="#aeaeb2"/></svg></div>
<div class="abs" style="left:285px;top:528.25px;width:1611.5px;height:1px;background:#38383a"></div>
<div class="abs" style="left:291.4px;top:503.5px;"><svg viewBox="0 0 14 12" width="13" height="11.5" ><circle cx="5" cy="3" r="2.6" fill="#3b82f6"/><path d="M0.2 11.6 C0.2 8.4 2 6.6 5 6.6 C6.2 6.6 7.2 6.9 7.9 7.4 C7.5 8 7.3 8.8 7.3 9.6 C7.3 10.4 7.5 11.1 7.9 11.6 Z" fill="#3b82f6"/><circle cx="11" cy="9.6" r="2.5" fill="#3b82f6"/><circle cx="11" cy="9.6" r="1" fill="#2c2c2e"/></svg></div>
<div class="t" style="left:309.8px;top:503.0px;font-size:13px;font-weight:400;color:#c7c7cc;">bwsebastian</div>
<div class="t" style="left:651.8px;top:503.0px;font-size:13.2px;font-weight:400;color:#f2f2f7;">18/03/2025 11:17</div>
<div class="t" style="left:1063.7px;top:503.0px;font-size:13.15px;font-weight:400;color:#f2f2f7;">test</div>
<div class="abs" style="left:1753.6px;top:505.6px;width:6.8px;height:6.8px;border-radius:50%;background:#ef5b4c"></div>
<div class="t" style="left:1765.8px;top:503.5px;font-size:11.2px;font-weight:700;color:#ef5b4c;">Pasif</div>
<div class="abs" style="left:1846.8px;top:497.2px;width:23.6px;height:24px;border-radius:3.5px;background:#363638"><svg style="position:absolute;left:6.8px;top:7.2px" viewBox="0 0 12 12" width="10" height="10" ><path d="M0.6 11.4 L1.2 8.2 L8 1.4 L10.6 4 L3.8 10.8 Z" fill="#aeaeb2"/><path d="M8.8 0.6 C9.3 0.1 10 0.1 10.5 0.6 L11.4 1.5 C11.9 2 11.9 2.7 11.4 3.2 L10.9 3.7 L8.3 1.1 Z" fill="#aeaeb2"/></svg></div>
<div class="abs" style="left:285px;top:566.5px;width:1611.5px;height:1px;background:#38383a"></div>
<div class="abs" style="left:291.4px;top:541.75px;"><svg viewBox="0 0 14 12" width="13" height="11.5" ><circle cx="5" cy="3" r="2.6" fill="#3b82f6"/><path d="M0.2 11.6 C0.2 8.4 2 6.6 5 6.6 C6.2 6.6 7.2 6.9 7.9 7.4 C7.5 8 7.3 8.8 7.3 9.6 C7.3 10.4 7.5 11.1 7.9 11.6 Z" fill="#3b82f6"/><circle cx="11" cy="9.6" r="2.5" fill="#3b82f6"/><circle cx="11" cy="9.6" r="1" fill="#2c2c2e"/></svg></div>
<div class="t" style="left:309.8px;top:541.25px;font-size:13px;font-weight:400;color:#c7c7cc;">system</div>
<div class="t" style="left:651.8px;top:541.25px;font-size:13.2px;font-weight:400;color:#f2f2f7;">20/02/2025 01:00</div>
<div class="t" style="left:1063.7px;top:541.25px;font-size:13.15px;font-weight:400;color:#f2f2f7;">TEST</div>
<div class="abs" style="left:1753.6px;top:543.85px;width:6.8px;height:6.8px;border-radius:50%;background:#ef5b4c"></div>
<div class="t" style="left:1765.8px;top:541.75px;font-size:11.2px;font-weight:700;color:#ef5b4c;">Pasif</div>
<div class="abs" style="left:1846.8px;top:535.45px;width:23.6px;height:24px;border-radius:3.5px;background:#363638"><svg style="position:absolute;left:6.8px;top:7.2px" viewBox="0 0 12 12" width="10" height="10" ><path d="M0.6 11.4 L1.2 8.2 L8 1.4 L10.6 4 L3.8 10.8 Z" fill="#aeaeb2"/><path d="M8.8 0.6 C9.3 0.1 10 0.1 10.5 0.6 L11.4 1.5 C11.9 2 11.9 2.7 11.4 3.2 L10.9 3.7 L8.3 1.1 Z" fill="#aeaeb2"/></svg></div>

</body></html>
